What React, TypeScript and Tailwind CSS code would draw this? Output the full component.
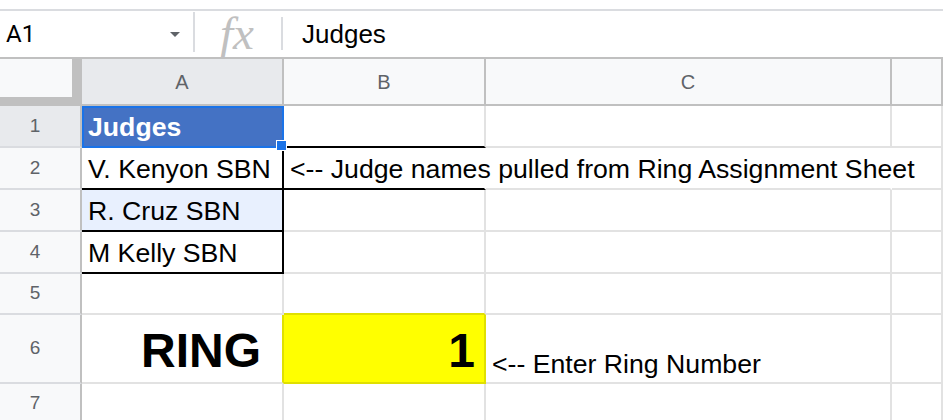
type CellProps = {
  w: string;
  r?: string;
  b?: string;
  className?: string;
  children?: React.ReactNode;
};

// one grid cell: 2px right/bottom gridlines, text sits on the bottom like in Sheets
function Cell({ w, r = "border-r-[#e2e2e2]", b = "border-b-[#e2e2e2]", className = "", children }: CellProps) {
  return (
    <div className={`flex h-full shrink-0 items-end border-r-2 border-b-2 whitespace-nowrap ${w} ${r} ${b} ${className}`}>
      {children}
    </div>
  );
}

function RowHead({ n, active }: { n: number; active?: boolean }) {
  return (
    <div
      className={`flex h-full w-[82px] shrink-0 items-center justify-center border-r-2 border-b-2 border-r-[#c0c0c0] border-b-[#dadce0] pr-[10px] text-[19px] text-[#5f6368] ${
        active ? "bg-[#e8eaed]" : "bg-[#f8f9fa]"
      }`}
    >
      {n}
    </div>
  );
}

const txt = "pl-[6px] pb-[4px] text-[26.67px] leading-[30px]";

export default function App() {
  return (
    <div className="h-[420px] w-[943px] overflow-hidden bg-white font-['Liberation_Sans',Arial,sans-serif] text-black">
      {/* Formula bar */}
      <div className="pt-[9px]">
        <div className="flex h-[48px] border-t-2 border-[#dadce0]">
          <div className="flex w-[193px] items-center justify-between pl-[6px] pr-[13px]">
            <span className="font-['Roboto',sans-serif] text-[24px]">A1</span>
            <span className="h-0 w-0 border-x-[5px] border-t-[5px] border-x-transparent border-t-[#5f6368]" />
          </div>
          <div className="mt-[1px] h-[40px] w-[2px] bg-[#dadce0]" />
          <div className="flex w-[86px] items-center justify-center">
            <span className="pr-[2px] pb-[2px] font-['Liberation_Serif',serif] text-[47px] leading-none text-[#c0c0c0] italic">
              fx
            </span>
          </div>
          <div className="mt-[6px] h-[33px] w-[2px] bg-[#dadce0]" />
          <div className="flex items-center pl-[19px] text-[26px]">Judges</div>
        </div>
      </div>

      {/* Column headers */}
      <div className="flex h-[49px] border-t-2 border-[#c0c0c0] text-[20px] text-[#5f6368]">
        <div className="flex w-[82px] shrink-0 flex-col">
          <div className="flex flex-1">
            <div className="w-[72px] bg-[#f8f9fa]" />
            <div className="flex-1 bg-[#c0c0c0]" />
          </div>
          <div className="h-[9px] bg-[#c0c0c0]" />
        </div>
        <div className="flex w-[202px] shrink-0 items-center justify-center border-r-2 border-b-2 border-[#c0c0c0] bg-[#e8eaed]">
          A
        </div>
        <div className="flex w-[202px] shrink-0 items-center justify-center border-r-2 border-b-2 border-[#c0c0c0] bg-[#f8f9fa]">
          B
        </div>
        <div className="flex w-[406px] shrink-0 items-center justify-center border-r-2 border-b-2 border-[#c0c0c0] bg-[#f8f9fa]">
          C
        </div>
        <div className="flex-1 border-r-2 border-b-2 border-[#c0c0c0] bg-[#f8f9fa]" />
      </div>

      {/* Row 1 */}
      <div className="flex h-[42px]">
        <RowHead n={1} active />
        <Cell w="w-[202px]" className={`relative bg-[#4472c4] font-bold text-white ${txt}`}>
          Judges
          <div className="pointer-events-none absolute top-0 -right-[2px] -bottom-[2px] left-0 border-2 border-[#1a73e8]" />
          <div className="absolute top-[34px] left-[194px] z-20 h-[11px] w-[11px] border border-white bg-[#1a73e8]" />
        </Cell>
        <Cell w="w-[202px]" b="border-b-black" />
        <Cell w="w-[406px]" />
        <Cell w="flex-1" />
      </div>

      {/* Row 2 */}
      <div className="flex h-[42px]">
        <RowHead n={2} />
        <Cell w="w-[202px]" r="border-r-black" b="border-b-black" className={txt}>
          V. Kenyon SBN
        </Cell>
        <Cell w="w-[202px]" r="border-r-white" b="border-b-black" className={`relative z-10 ${txt}`}>
          {"<-- Judge names pulled from Ring Assignment Sheet"}
        </Cell>
        <Cell w="w-[406px]" r="border-r-white" />
        <Cell w="flex-1" />
      </div>

      {/* Row 3 */}
      <div className="flex h-[42px]">
        <RowHead n={3} />
        <Cell w="w-[202px]" r="border-r-black" b="border-b-black" className={`bg-[#e8f0fe] ${txt}`}>
          R. Cruz SBN
        </Cell>
        <Cell w="w-[202px]" />
        <Cell w="w-[406px]" />
        <Cell w="flex-1" />
      </div>

      {/* Row 4 */}
      <div className="flex h-[42px]">
        <RowHead n={4} />
        <Cell w="w-[202px]" r="border-r-black" b="border-b-black" className={txt}>
          M Kelly SBN
        </Cell>
        <Cell w="w-[202px]" />
        <Cell w="w-[406px]" />
        <Cell w="flex-1" />
      </div>

      {/* Row 5 */}
      <div className="flex h-[41px]">
        <RowHead n={5} />
        <Cell w="w-[202px]" />
        <Cell w="w-[202px]" b="border-b-[#e0e000]" />
        <Cell w="w-[406px]" />
        <Cell w="flex-1" />
      </div>

      {/* Row 6 */}
      <div className="flex h-[69px]">
        <RowHead n={6} />
        <Cell
          w="w-[202px]"
          r="border-r-[#e0e000]"
          className="justify-end pr-[21px] pb-[7px] text-[48px] leading-none font-bold"
        >
          RING
        </Cell>
        <Cell
          w="w-[202px]"
          r="border-r-[#e0e000]"
          b="border-b-[#e0e000]"
          className="justify-end bg-[#ffff00] pr-[9px] pb-[7px] text-[48px] leading-none font-bold"
        >
          1
        </Cell>
        <Cell w="w-[406px]" className="pl-[6px] pb-[3px] text-[26.67px] leading-[30px]">
          {"<-- Enter Ring Number"}
        </Cell>
        <Cell w="flex-1" />
      </div>

      {/* Row 7 */}
      <div className="flex h-[40px]">
        <RowHead n={7} />
        <Cell w="w-[202px]" />
        <Cell w="w-[202px]" />
        <Cell w="w-[406px]" />
        <Cell w="flex-1" />
      </div>
    </div>
  );
}
